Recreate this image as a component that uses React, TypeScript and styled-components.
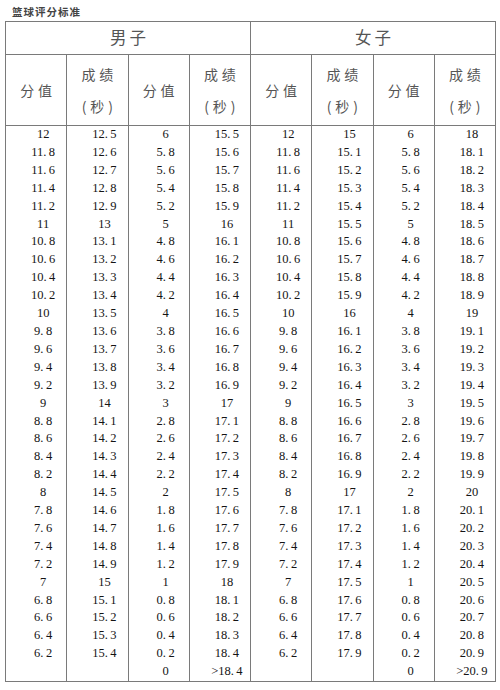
import React from "react";
import styled, { createGlobalStyle } from "styled-components";

const Global = createGlobalStyle`
  html, body { margin: 0; padding: 0; background: #ffffff; }
  body { font-family: "Liberation Serif", "Noto Sans CJK SC", serif; }
`;

const Page = styled.div`
  width: 500px;
  height: 690px;
  background: #ffffff;
  overflow: hidden;
`;

const Title = styled.div`
  height: 21px;
  padding-left: 12px;
  font-family: "Noto Sans CJK SC", sans-serif;
  font-weight: 700;
  font-size: 10.5px;
  line-height: 23px;
  letter-spacing: 1px;
  color: #444444;
  box-sizing: border-box;
`;

const Table = styled.table`
  margin-left: 5px;
  width: 490px;
  border-collapse: collapse;
  table-layout: fixed;
  border: 1px solid #7a7a7a;
`;

const GroupCell = styled.th`
  height: 29px;
  padding: 0 0 3px 0;
  border: 1px solid #7a7a7a;
  font-family: "Noto Sans CJK SC", sans-serif;
  font-weight: 400;
  font-size: 16.5px;
  line-height: 20px;
  letter-spacing: 3px;
  text-indent: 3px;
  color: #555555;
  text-align: center;
  vertical-align: middle;
`;

const HeadCell = styled.th`
  height: 70px;
  padding: 0;
  border: 1px solid #7a7a7a;
  font-family: "Noto Sans CJK SC", sans-serif;
  font-weight: 400;
  font-size: 14px;
  line-height: 32px;
  letter-spacing: 4px;
  text-indent: 4px;
  color: #555555;
  text-align: center;
  vertical-align: middle;
`;

const HeadLine = styled.div`
  white-space: nowrap;
`;

const Cell = styled.td`
  height: 17.9px;
  padding: 0 0 0 14px;
  border-left: 1px solid #7a7a7a;
  border-right: 1px solid #7a7a7a;
  border-top: none;
  border-bottom: none;
  font-family: "Liberation Serif", serif;
  font-size: 12.5px;
  line-height: 17.9px;
  color: #141414;
  text-align: center;
  white-space: nowrap;
`;

const Row = styled.tr``;

const range = (start: number, step: number, count: number) =>
  Array.from({ length: count }, (_, i) => Math.round((start + step * i) * 10) / 10);

const fmt = (v: number) => String(v).replace(".", ".\u2009");

const menScore = range(12, -0.2, 30).map(fmt).concat([""]);
const menTime1 = range(12.5, 0.1, 30).map(fmt).concat([""]);
const menScore2 = range(6, -0.2, 31).map(fmt);
const menTime2 = range(15.5, 0.1, 30).map(fmt).concat([">18.\u20094"]);
const womenScore = menScore;
const womenTime1 = range(15, 0.1, 30).map(fmt).concat([""]);
const womenScore2 = menScore2;
const womenTime2 = range(18, 0.1, 30).map(fmt).concat([">20.\u20099"]);

const columns = [
  menScore,
  menTime1,
  menScore2,
  menTime2,
  womenScore,
  womenTime1,
  womenScore2,
  womenTime2,
];

const ScoreHead = () => (
  <HeadCell>
    <HeadLine>分值</HeadLine>
  </HeadCell>
);

const TimeHead = () => (
  <HeadCell>
    <HeadLine>成绩</HeadLine>
    <HeadLine>(秒)</HeadLine>
  </HeadCell>
);

export default function App() {
  return (
    <Page>
      <Global />
      <Title>篮球评分标准</Title>
      <Table>
        <colgroup>
          {columns.map((_, i) => (
            <col key={i} style={{ width: "61.25px" }} />
          ))}
        </colgroup>
        <thead>
          <tr>
            <GroupCell colSpan={4}>男子</GroupCell>
            <GroupCell colSpan={4}>女子</GroupCell>
          </tr>
          <tr>
            <ScoreHead />
            <TimeHead />
            <ScoreHead />
            <TimeHead />
            <ScoreHead />
            <TimeHead />
            <ScoreHead />
            <TimeHead />
          </tr>
        </thead>
        <tbody>
          {menScore.map((_, r) => (
            <Row key={r}>
              {columns.map((col, c) => (
                <Cell key={c}>{col[r]}</Cell>
              ))}
            </Row>
          ))}
        </tbody>
      </Table>
    </Page>
  );
}
